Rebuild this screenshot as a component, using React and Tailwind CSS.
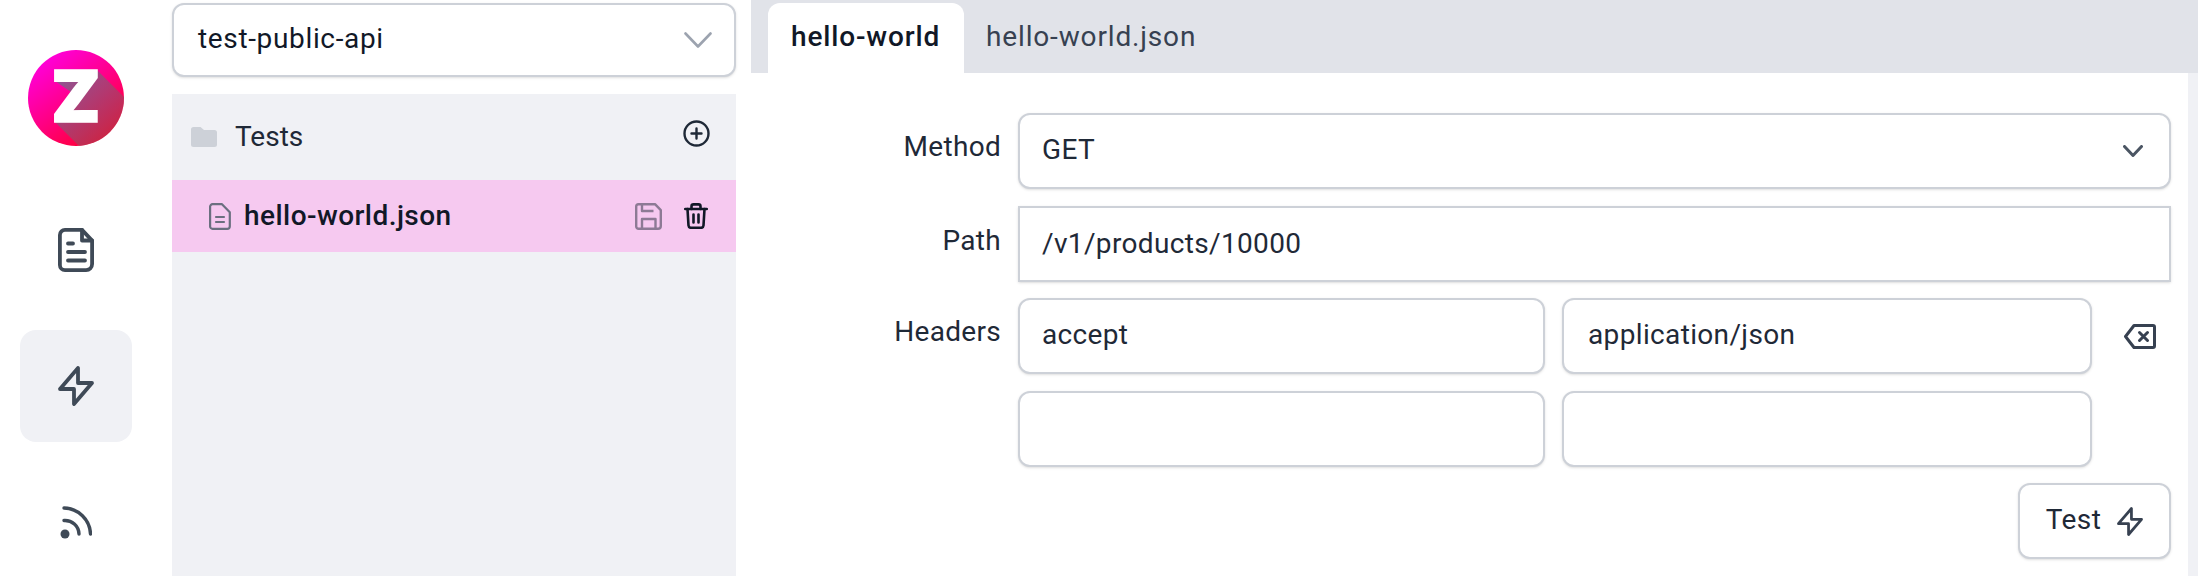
const Logo = () => (
  <svg width="96" height="96" viewBox="0 0 96 96" className="shrink-0">
    <defs>
      <linearGradient id="logoBg" x1="0.1" y1="0.05" x2="0.75" y2="0.95">
        <stop offset="0" stopColor="#ff00e6" />
        <stop offset="1" stopColor="#ff0033" />
      </linearGradient>
      <linearGradient id="logoShade" x1="0" y1="0" x2="1" y2="1">
        <stop offset="0" stopColor="#6f6f8f" stopOpacity="0.85" />
        <stop offset="1" stopColor="#b03030" stopOpacity="0.2" />
      </linearGradient>
      <clipPath id="logoClip">
        <circle cx="48" cy="48" r="48" />
      </clipPath>
    </defs>
    <circle cx="48" cy="48" r="48" fill="url(#logoBg)" />
    <polygon
      points="69,20 130,81 130,130 85,130 27,72 43,42 27,31 27,20"
      fill="url(#logoShade)"
      clipPath="url(#logoClip)"
    />
    <text x="48" y="71.500" textAnchor="middle" className="fill-white stroke-white stroke-[1.5px] font-['Inter'] font-black text-[71px]">Z</text>
  </svg>
)

const DocIcon = () => (
  <svg width="36" height="44" viewBox="0 0 36 44" fill="none" stroke="#3f4a57" strokeWidth="3.800" strokeLinecap="round" strokeLinejoin="round">
    <path d="M7 1.900h17l10.100 10.700V36.100a6 6 0 0 1-6 6H7a5.100 5.100 0 0 1-5.100-5.100V7A5.100 5.100 0 0 1 7 1.900z" />
    <path d="M24 2v10.500h10" />
    <path d="M10 15.500h5M10 24h17M10 32.500h17" />
  </svg>
)

const BoltIcon = ({ w = 36, h = 40, color = "#3f4a57" }) => (
  <svg width={w} height={h} viewBox="0 0 36 40" fill="none" stroke={color} strokeWidth="3.800" strokeLinecap="round" strokeLinejoin="round">
    <path d="M20 2v15h14L16 38V23H2z" />
  </svg>
)

const RssIcon = () => (
  <svg width="32" height="34" viewBox="0 0 32 34" fill="none" stroke="#3f4a57" strokeWidth="3.400" strokeLinecap="round">
    <circle cx="5" cy="29" r="4.500" fill="#3f4a57" stroke="none" />
    <path d="M4 15.500A14 14 0 0 1 19 29" />
    <path d="M4 3A27 27 0 0 1 30.500 29" />
  </svg>
)

const Chevron = ({ w, h, color, sw }) => (
  <svg width={w} height={h} viewBox={`0 0 ${w} ${h}`} fill="none" stroke={color} strokeWidth={sw} strokeLinecap="round" strokeLinejoin="round">
    <path d={`M1.500 1.500L${w / 2} ${h - 1.5}L${w - 1.5} 1.500`} />
  </svg>
)

const FolderIcon = () => (
  <svg width="26" height="20" viewBox="0 0 26 20" fill="#cdd1d8">
    <path d="M2.500 0h7l3.500 3h10.500a2.500 2.500 0 0 1 2.500 2.500V17.500a2.500 2.500 0 0 1-2.500 2.500h-21A2.500 2.500 0 0 1 0 17.500v-15A2.500 2.500 0 0 1 2.500 0z" />
  </svg>
)

const PlusCircle = () => (
  <svg width="27" height="27" viewBox="0 0 27 27" fill="none" stroke="#1f2937" strokeWidth="2.400" strokeLinecap="round">
    <circle cx="13.500" cy="13.500" r="12" />
    <path d="M13.500 8.500v10M8.500 13.500h10" />
  </svg>
)

const FileIcon = () => (
  <svg width="22" height="27" viewBox="0 0 22 27" fill="none" stroke="#6b6f80" strokeWidth="2.200" strokeLinecap="round" strokeLinejoin="round">
    <path d="M3.500 1.200h9.500l7.800 8v14a2.600 2.600 0 0 1-2.600 2.600H3.500a2.400 2.400 0 0 1-2.400-2.400V3.600a2.400 2.400 0 0 1 2.400-2.400z" />
    <path d="M7 14h8M7 19h8" />
  </svg>
)

const SaveIcon = () => (
  <svg width="27" height="27" viewBox="0 0 27 27" fill="none" stroke="#8d7a95" strokeWidth="2.400" strokeLinejoin="round">
    <path d="M3.500 1.200h16.500l5.800 6v15.800a2.800 2.800 0 0 1-2.800 2.800H3.500a2.300 2.300 0 0 1-2.300-2.300V3.500a2.300 2.300 0 0 1 2.300-2.300z" />
    <path d="M7 1.500v6.500h11.500M7 25.500v-9.500h13.500v9.500" />
  </svg>
)

const TrashIcon = () => (
  <svg width="24" height="26" viewBox="0 0 24 26" fill="none" stroke="#111827" strokeWidth="2.600" strokeLinecap="round" strokeLinejoin="round">
    <path d="M1.200 6h21.600" />
    <path d="M7.500 6V3.400a2 2 0 0 1 2-2h5a2 2 0 0 1 2 2V6" />
    <path d="M3.500 6l1 16.500a2.500 2.500 0 0 0 2.500 2.300h10a2.500 2.500 0 0 0 2.500-2.300l1-16.500" />
    <path d="M9.500 11.500v8M14.500 11.500v8" />
  </svg>
)

const BackspaceIcon = () => (
  <svg width="32" height="25" viewBox="0 0 32 25" fill="none" stroke="#374151" strokeWidth="3" strokeLinecap="round" strokeLinejoin="round">
    <path d="M10 1.500h19a1.500 1.500 0 0 1 1.500 1.500v19a1.500 1.500 0 0 1-1.500 1.500H10L1.500 12.500z" />
    <path d="M15.500 8.500l8 8M23.500 8.500l-8 8" />
  </svg>
)

const fieldClass = "h-[76px] border-2 border-[#cdd1d8] bg-white px-[22px] text-[#1f2937] shadow-sm outline-none tracking-[0.35px]"

const App = () => {
  return (
    <div className="flex h-[576px] w-full overflow-hidden bg-white font-['Roboto',sans-serif] text-[28px] text-[#1f2937]">
      {/* left rail */}
      <div className="flex w-[172px] shrink-0 flex-col items-center pr-[20px]">
        <div className="mt-[50px]"><Logo /></div>
        <div className="mt-[82px]"><DocIcon /></div>
        <div className="mt-[58px] flex h-[112px] w-[112px] shrink-0 items-center justify-center rounded-2xl bg-[#f0f1f5]">
          <BoltIcon />
        </div>
        <div className="mt-[63px]"><RssIcon /></div>
      </div>

      {/* file tree */}
      <div className="flex w-[564px] shrink-0 flex-col">
        <div className="mt-[3px] flex h-[74px] items-center justify-between rounded-xl border-2 border-[#cdd1d8] bg-white pl-[24px] pr-[22px] text-[#111827] shadow-sm">
          <span className="mb-[2px] tracking-[0.65px]">test-public-api</span>
          <Chevron w={28} h={16} color="#9ca3af" sw={2.6} />
        </div>
        <div className="mt-[17px] flex-1 bg-[#f0f1f5]">
          <div className="flex h-[86px] items-center justify-between pl-[19px] pr-[26px]">
            <div className="flex items-center gap-[18px]">
              <FolderIcon />
              <span>Tests</span>
            </div>
            <div className="mb-[8px]"><PlusCircle /></div>
          </div>
          <div className="flex h-[72px] items-center justify-between bg-[#f6c9f0] pl-[37px] pr-[28px]">
            <div className="flex items-center gap-[13px] font-medium text-[#111827]">
              <FileIcon />
              <span className="tracking-[0.45px]">hello-world.json</span>
            </div>
            <div className="flex items-center gap-[22px]">
              <SaveIcon />
              <TrashIcon />
            </div>
          </div>
        </div>
      </div>

      {/* editor */}
      <div className="ml-[15px] flex min-w-0 flex-1 flex-col">
        <div className="flex h-[73px] items-end bg-[#e1e3e9] pl-[17px]">
          <div className="flex h-[70px] w-[196px] items-center rounded-t-xl bg-white pb-[2px] pl-[23px] font-medium tracking-[0.85px] text-[#111827]">hello-world</div>
          <div className="flex h-[70px] items-center pb-[2px] pl-[22px] tracking-[0.85px] text-[#374151]">hello-world.json</div>
        </div>
        <div className="flex flex-1">
          <div className="flex flex-1 flex-col gap-[16.5px] pr-[17px] pt-[40px]">
            <div className="flex">
              <div className="w-[250px] pt-[13px] text-right tracking-[0.3px]">Method</div>
              <div className={`${fieldClass} ml-[17px] flex flex-1 items-center justify-between rounded-xl pr-[26px]`}>
                <span className="mb-[2px]">GET</span>
                <Chevron w={20} h={12} color="#4b5563" sw={3} />
              </div>
            </div>
            <div className="flex">
              <div className="w-[250px] pt-[14px] text-right tracking-[0.3px]">Path</div>
              <input readOnly defaultValue="/v1/products/10000" className={`${fieldClass} ml-[17px] flex-1`} />
            </div>
            <div className="flex">
              <div className="w-[250px] pt-[13px] text-right tracking-[0.3px]">Headers</div>
              <div className="ml-[17px] flex flex-1 items-center">
                <input readOnly defaultValue="accept" className={`${fieldClass} w-[527px] rounded-xl pb-[4px]`} />
                <input readOnly defaultValue="application/json" className={`${fieldClass} ml-[17px] w-[530px] rounded-xl pb-[4px] pl-[24px]`} />
                <div className="ml-[32px]"><BackspaceIcon /></div>
              </div>
            </div>
            <div className="flex">
              <div className="ml-[267px] flex flex-1">
                <input readOnly className={`${fieldClass} w-[527px] rounded-xl`} />
                <input readOnly className={`${fieldClass} ml-[17px] w-[530px] rounded-xl`} />
              </div>
            </div>
            <div className="flex justify-end">
              <div className="flex h-[76px] w-[153px] items-center justify-center gap-[16px] rounded-xl border-2 border-[#cdd1d8] bg-white shadow-sm">
                <span className="mb-[3px] tracking-[0.4px]">Test</span>
                <BoltIcon w={26} h={29} color="#374151" />
              </div>
            </div>
          </div>
          <div className="w-[10px] bg-[#f0f1f5]"></div>
        </div>
      </div>
    </div>
  )
}

export default App
